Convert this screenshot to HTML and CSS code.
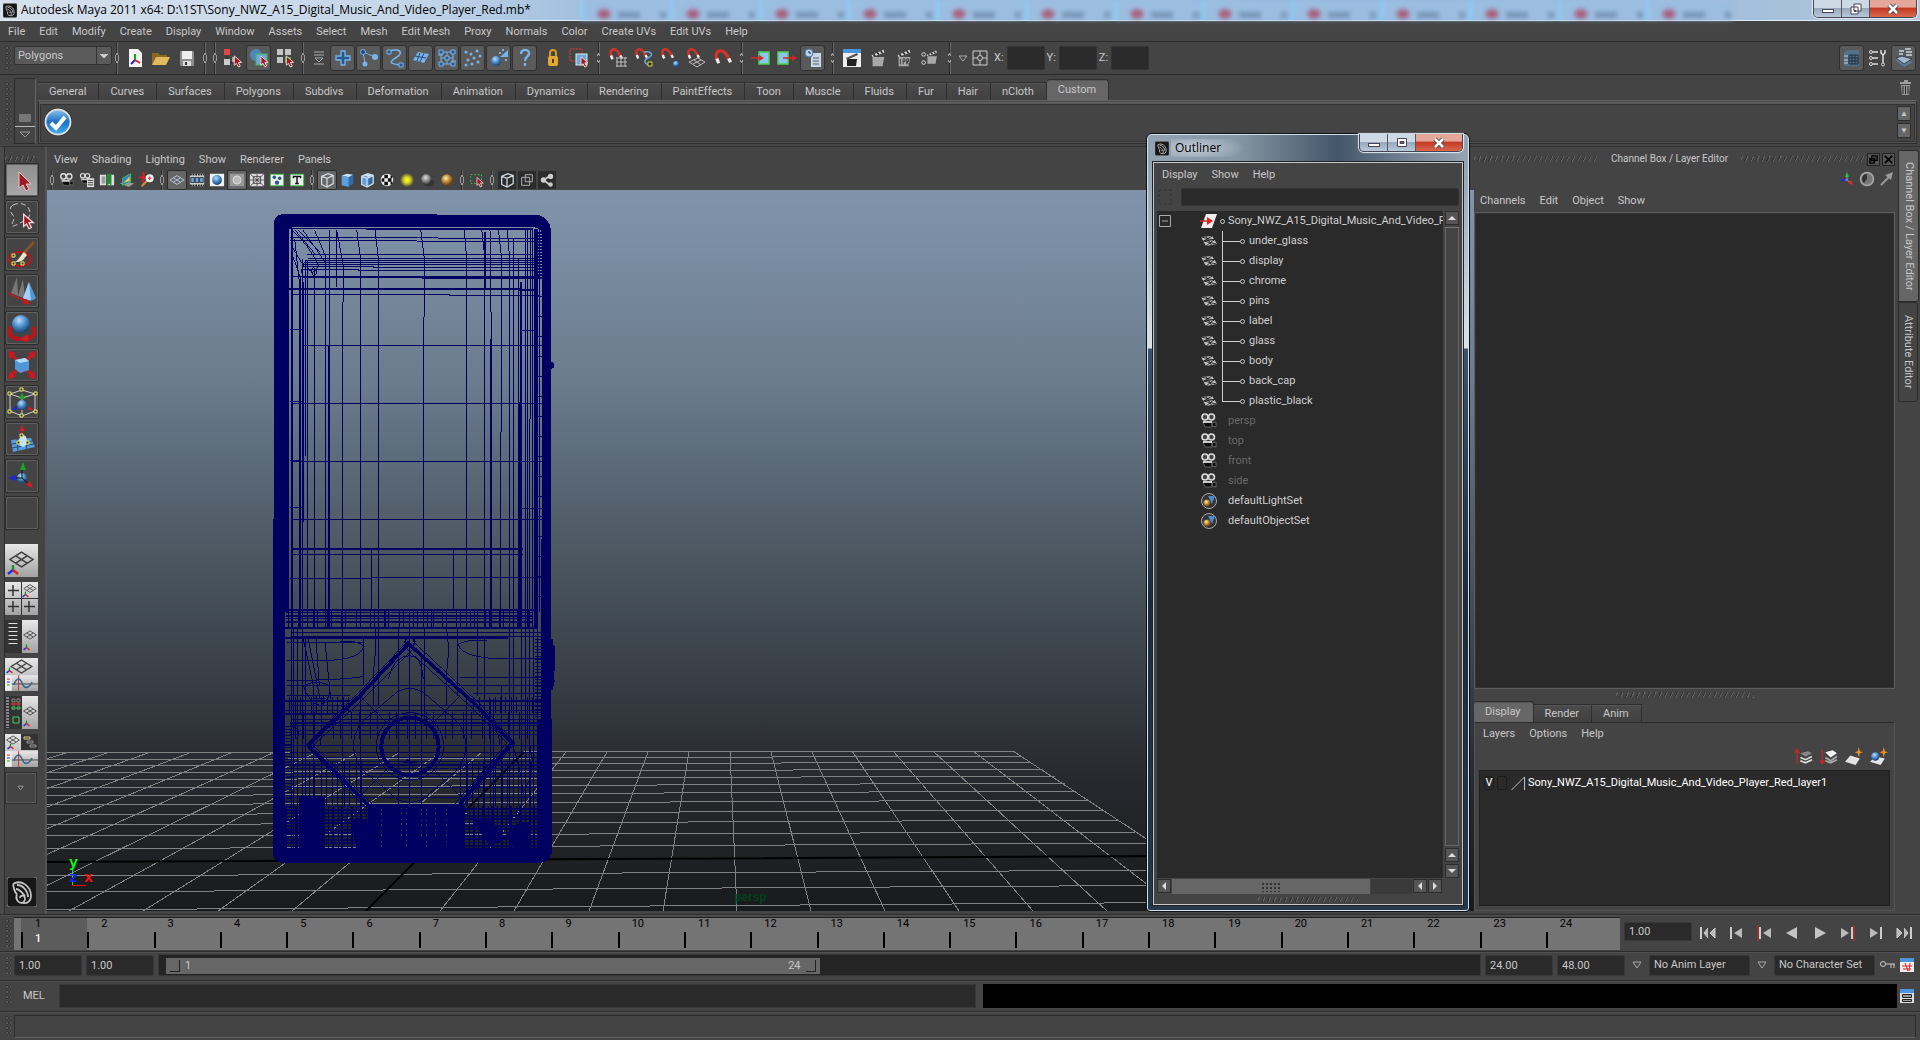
FILE: index.html
```html
<!DOCTYPE html>
<html lang="en">
<head>
<meta charset="utf-8">
<title>Autodesk Maya 2011 x64</title>
<link rel="stylesheet" href="styles.css">
</head>
<body>
<svg class="sprite" aria-hidden="true">
  <defs>
    <radialGradient id="gBall" cx=".4" cy=".3" r=".7"><stop offset="0" stop-color="#b9dcf8"/><stop offset=".5" stop-color="#4f90cf"/><stop offset="1" stop-color="#17406e"/></radialGradient>
    <radialGradient id="gGrey" cx=".45" cy=".35" r=".6"><stop offset="0" stop-color="#ddd"/><stop offset="1" stop-color="#555"/></radialGradient>
    <radialGradient id="gGold" cx=".4" cy=".35" r=".65"><stop offset="0" stop-color="#fff0b0"/><stop offset=".5" stop-color="#b98a3a"/><stop offset="1" stop-color="#5e3c0c"/></radialGradient>
    <radialGradient id="gSun"><stop offset="0" stop-color="#ffff40"/><stop offset=".4" stop-color="#dcdc20"/><stop offset="1" stop-color="#dcdc20" stop-opacity="0"/></radialGradient>
    <linearGradient id="gPlate" x2="0" y2="1"><stop offset="0" stop-color="#e8e8e8"/><stop offset="1" stop-color="#a2a2a2"/></linearGradient>
    <linearGradient id="gCheck" x2="0" y2="1"><stop offset="0" stop-color="#8cc4ee"/><stop offset=".5" stop-color="#1a6fc4"/><stop offset="1" stop-color="#45b4f4"/></linearGradient>
  </defs>
  <symbol id="cursor" viewBox="0 0 10 14"><path d="M1 1v10l2.400-2 2 4 2-1-2-4h3.600z" fill="#a3151f" stroke="#f3dede" stroke-width="1"/></symbol>
  <symbol id="logo" viewBox="0 0 30 30"><rect width="30" height="30" rx="3" fill="#161616" stroke="#777"/><path d="M6 7c8-5 18 2 18 12 0 5-4 8-8 7M6 7c1 4 1 8 4 10M10 8c6 0 11 6 11 12M9 12c4 0 7 5 9 7M10 17c-2 5 1 9 5 9 3-1 4-5 2-7-2-1-4 0-4 2" fill="none" stroke="#c4c4c4" stroke-width="1.800"/></symbol>
  <symbol id="axis" viewBox="0 0 12 12"><path d="M6 6V1" stroke="#08a020" stroke-width="2.400"/><path d="M6 6l-5 4" stroke="#1c2fe0" stroke-width="2.400"/><path d="M6 6l5 4" stroke="#e02020" stroke-width="2.400"/></symbol>
  <symbol id="plane" viewBox="0 0 24 16"><path d="M12 1l11 7-11 7L1 8zM6.500 4.500l11 7M17.500 4.500l-11 7" fill="none" stroke="#3c3c3c" stroke-width="1.400"/></symbol>
  <symbol id="cam" viewBox="0 0 18 18"><path d="M3 10h9v5H5zM12 11l4-1v5l-4-1z" fill="#0c0c0c" stroke="#777" stroke-width=".8"/><circle cx="5" cy="5" r="3" fill="#444" stroke="#ddd" stroke-width="1.600"/><circle cx="11.500" cy="5" r="3" fill="#444" stroke="#ddd" stroke-width="1.600"/><path d="M3 9h9v2H3z" fill="#ccc"/></symbol>
  <symbol id="mesh" viewBox="0 0 18 14"><path d="M1 3l11-1 5 8-11 2z" fill="#c4c4c4"/><path d="M6 2.500l5.500 8.500M3.500 7l11-1.500M1 3l13 3M3.500 7l13 3M12 2l-8 5M14.500 5.500L6 12" stroke="#1c1c1c" stroke-width=".9"/></symbol>
  <symbol id="set" viewBox="0 0 18 18"><circle cx="9" cy="9" r="7.500" fill="#333" stroke="#aaa"/><path d="M8 4h7l-3 8z" fill="#4a88d0"/><circle cx="7" cy="11" r="3.600" fill="url(#gGold)"/></symbol>
  <symbol id="magnet" viewBox="0 0 20 20"><path d="M5 12C1 5 5 1 9 2c4 0 6 6 9 11" fill="none" stroke="#d03428" stroke-width="3.600"/><path d="M4 10l2 5M16.500 10l2 4" stroke="#eee" stroke-width="3.400"/></symbol>
  <symbol id="clap" viewBox="0 0 20 22"><path d="M4 10h13l-2 10H4z" fill="#a8a8a8"/><path d="M3 8l13-6 1 3L4 10z" fill="#ddd"/><path d="M5 7l2 2M9 5l2 2M13 3.500l2 2" stroke="#222" stroke-width="1.800"/></symbol>
  <symbol id="cube" viewBox="0 0 18 18"><path d="M3 5l7-3 6 2v9l-7 4-6-3zM3 5l6 2 7-3M9 7v10" fill="none" stroke="currentColor" stroke-width="1.400"/></symbol>
  <symbol id="solid" viewBox="0 0 18 18"><path d="M3 4l6-2 7 1-5 3z" fill="#c4e4fc"/><path d="M3 4l8 2v11l-8-2z" fill="#5f9fdc"/><path d="M11 6l5-3v10l-5 4z" fill="#2f6cae"/></symbol>
  <symbol id="wave" viewBox="0 0 34 16"><rect width="34" height="16" fill="url(#gPlate)"/><rect width="7" height="16" fill="#eee"/><path d="M2 4h3" stroke="#d22"/><path d="M2 7h3" stroke="#22d"/><path d="M2 10h3" stroke="#2a2"/><path d="M7 9h27" stroke="#444"/><path d="M14 0v16" stroke="#d22"/><path d="M9 10c4-10 7-6 9-1s6 5 10-2" fill="none" stroke="#3b6590" stroke-width="1.600"/></symbol>
</svg>

<div class="app">
  <header class="titlebar">
    <svg class="i16"><use href="#logo"/></svg>
    <h1>Autodesk Maya 2011 x64: D:\1ST\Sony_NWZ_A15_Digital_Music_And_Video_Player_Red.mb*</h1>
    <div class="glass"><i></i><i></i><i></i><i></i><i></i><i></i><i></i><i></i><i></i><i></i><i></i><i></i><i></i></div>
    <div class="winbtns">
      <button aria-label="Minimize"><svg viewBox="0 0 20 16"><rect x="4.500" y="8.500" width="11" height="3" fill="#fff" stroke="#445"/></svg></button>
      <button aria-label="Restore"><svg viewBox="0 0 20 16"><path d="M8 3h7v7H8zM5 6h7v7H5z" fill="#fff" stroke="#445"/><path d="M8 9h2v2H8z" fill="#445"/></svg></button>
      <button class="close" aria-label="Close"><svg viewBox="0 0 20 16"><path d="M6 4l8 8M14 4l-8 8" stroke="#445" stroke-width="4.500"/><path d="M6 4l8 8M14 4l-8 8" stroke="#fff" stroke-width="2.500"/></svg></button>
    </div>
  </header>

  <nav class="menu mainmenu">
    <button>File</button><button>Edit</button><button>Modify</button><button>Create</button><button>Display</button><button>Window</button><button>Assets</button><button>Select</button><button>Mesh</button><button>Edit Mesh</button><button>Proxy</button><button>Normals</button><button>Color</button><button>Create UVs</button><button>Edit UVs</button><button>Help</button>
  </nav>

  <div class="status">
    <span class="vgrip"></span>
    <select class="mode" aria-label="Menu set"><option>Polygons</option></select>
    <span class="sep"></span>
    <button class="t" aria-label="New scene"><svg viewBox="0 0 20 20"><path d="M4 1h9l4 4v14H4z" fill="#f4f4f4"/><path d="M10 12V6" stroke="#1a1" stroke-width="2"/><path d="M10 12l-4 4" stroke="#22d" stroke-width="2"/><path d="M10 12l5 3" stroke="#d22" stroke-width="2"/></svg></button>
    <button class="t" aria-label="Open scene"><svg viewBox="0 0 20 20"><path d="M1 17V5h6l2 2h7v3" fill="#8c6a1c"/><path d="M1 17l4-8h14l-4 8z" fill="#e0b960"/></svg></button>
    <button class="t" aria-label="Save scene"><svg viewBox="0 0 20 20"><rect x="3" y="3" width="14" height="15" rx="1" fill="#8e8e8e"/><rect x="5" y="3" width="10" height="8" fill="#eee"/><rect x="6" y="13" width="8" height="5" fill="#ddd"/><path d="M8 14h2v3H8z" fill="#333"/></svg></button>
    <span class="sep"></span><span class="sep"></span>
    <button class="t" aria-label="Select by hierarchy"><svg viewBox="0 0 20 20"><rect x="1" y="1" width="6" height="6" fill="#e04848"/><path d="M4 8v7h5" stroke="#222" fill="none"/><rect x="1" y="11" width="6" height="6" fill="#ccc"/><rect x="9" y="9" width="5" height="5" fill="#aaa"/><use href="#cursor" x="10" y="7" width="10" height="13"/></svg></button>
    <button class="t on" aria-label="Select by object type"><svg viewBox="0 0 20 20"><circle cx="7" cy="7" r="6" fill="#4d86bd"/><rect x="7" y="6" width="11" height="11" fill="#6fa8dc" stroke="#3fb848"/><use href="#cursor" x="11" y="7" width="9" height="13"/></svg></button>
    <button class="t" aria-label="Select by component type"><svg viewBox="0 0 20 20"><path d="M2 1h6v6H2zM10 1h6v6h-6zM2 9h6v6H2z" fill="#c4c4c4"/><path d="M10 9h6v6h-6z" fill="#2db84a"/><use href="#cursor" x="10" y="7" width="10" height="13"/></svg></button>
    <span class="sep"></span>
    <button class="t slim" aria-label="Mask menu"><svg viewBox="0 0 20 20"><path d="M5 4h10M5 7h10M5 16h10M6 10h8l-4 4z" fill="none" stroke="#aaa"/></svg></button>
    <button class="t on" aria-label="Handles"><svg viewBox="0 0 20 20"><path d="M8 3h4v5h5v4h-5v5H8v-5H3V8h5z" fill="#28598c" stroke="#76b4ea" stroke-width="1.300"/></svg></button>
    <button class="t on" aria-label="Joints"><svg viewBox="0 0 20 20"><path d="M4 4l12 5M4 4l2 11" stroke="#76b4ea"/><circle cx="4" cy="4" r="2.500" fill="#1f4c7c" stroke="#76b4ea"/><circle cx="16" cy="9" r="3" fill="#76b4ea"/><circle cx="6" cy="16" r="2.500" fill="#76b4ea"/></svg></button>
    <button class="t on" aria-label="Curves"><svg viewBox="0 0 20 20"><path d="M4 4c8-5 16 0 8 5s-9 7 5 8" fill="none" stroke="#76b4ea" stroke-width="1.600"/><path d="M2 2h4v4H2zM14 15h4v4h-4z" fill="#28598c" stroke="#76b4ea"/></svg></button>
    <button class="t on" aria-label="Surfaces"><svg viewBox="0 0 20 20"><path d="M2 12l5-8 11 2-5 9z" fill="#76b4ea"/><path d="M4 8l11 2M9 5l-3 8M13 5l-4 9" stroke="#244a70"/></svg></button>
    <button class="t on" aria-label="Deformations"><svg viewBox="0 0 20 20"><path d="M4 4h12v12H4zM4 10h12M10 4v12M1 7h5M14 13h5" fill="none" stroke="#76b4ea"/><path d="M2 2h4v4H2zM14 2h4v4h-4zM2 14h4v4H2zM14 14h4v4h-4zM8 8h4v4H8z" fill="#28598c" stroke="#76b4ea"/></svg></button>
    <button class="t on" aria-label="Dynamics"><svg viewBox="0 0 20 20"><g fill="#76b4ea"><circle cx="3" cy="4" r="1.500"/><circle cx="8" cy="6" r="1.500"/><circle cx="14" cy="3" r="1.500"/><circle cx="17" cy="8" r="1.500"/><circle cx="11" cy="10" r="1.500"/><circle cx="5" cy="12" r="1.500"/><circle cx="15" cy="14" r="1.500"/><circle cx="9" cy="16" r="1.500"/><circle cx="3" cy="17" r="1.500"/></g></svg></button>
    <button class="t on" aria-label="Rendering"><svg viewBox="0 0 20 20"><circle cx="7" cy="13" r="5" fill="url(#gBall)"/><path d="M11 9l8-7v7zM10 4h2v2h-2zM13 1h2v2h-2zM16 11h2v2h-2z" fill="#76b4ea"/></svg></button>
    <button class="t on" aria-label="Miscellaneous"><svg viewBox="0 0 20 20"><path d="M6 6c0-6 9-5 8 0-1 3-4 3-4 7M10 15v3" fill="none" stroke="#76b4ea" stroke-width="2.400"/></svg></button>
    <button class="t lock" aria-label="Lock selection"><svg viewBox="0 0 20 20"><path d="M7 9V5c0-4 6-4 6 0v4" fill="none" stroke="#d09a28" stroke-width="2"/><rect x="5" y="8" width="10" height="10" rx="2" fill="#e2a92c"/><path d="M10 11v4" stroke="#523600" stroke-width="2"/></svg></button>
    <button class="t" aria-label="Highlight selection"><svg viewBox="0 0 20 20"><path d="M1 1h12v12H1z" fill="none" stroke="#e03838" stroke-dasharray="2 1"/><rect x="7" y="6" width="11" height="11" fill="#6fa8dc" stroke="#d8f0d8"/><use href="#cursor" x="11" y="8" width="9" height="12"/></svg></button>
    <span class="sep far"></span>
    <button class="t" aria-label="Snap to grids"><svg viewBox="0 0 20 20"><use href="#magnet" width="15" height="15"/><path d="M8 10h11M8 14h11M8 18h11M9 9v10M13 9v10M17 9v10" stroke="#bbb"/></svg></button>
    <button class="t" aria-label="Snap to curves"><svg viewBox="0 0 20 20"><use href="#magnet" width="14" height="14"/><path d="M10 4c8-1 10 3 4 6s-3 7 4 7" fill="none" stroke="#6fa8dc" stroke-width="1.500"/><path d="M14 14h4v4h-4z" fill="#222" stroke="#dede40"/></svg></button>
    <button class="t" aria-label="Snap to points"><svg viewBox="0 0 20 20"><use href="#magnet" width="14" height="14"/><circle cx="16" cy="16" r="3" fill="url(#gBall)"/></svg></button>
    <button class="t" aria-label="Snap to view planes"><svg viewBox="0 0 20 20"><use href="#magnet" width="14" height="14"/><path d="M3 14l9-4 7 4-8 5zM8 12l7 5M7 16l8-4" fill="none" stroke="#bbb"/></svg></button>
    <button class="t" aria-label="Make live"><svg viewBox="0 0 20 20"><use href="#magnet" x="1" y="1" width="19" height="19"/></svg></button>
    <span class="sep far"></span>
    <button class="t" aria-label="Inputs"><svg viewBox="0 0 20 20"><rect x="8" y="4" width="10" height="12" fill="#8cc6ee" stroke="#4fd04f" stroke-width="1.500"/><path d="M0 10h8" stroke="#d22" stroke-width="1.500"/><path d="M8 7l5 3-5 3z" fill="#d22"/></svg></button>
    <button class="t" aria-label="Outputs"><svg viewBox="0 0 20 20"><rect x="1" y="4" width="10" height="12" fill="#8cc6ee" stroke="#4fd04f" stroke-width="1.500"/><path d="M6 10h9" stroke="#d22" stroke-width="1.500"/><path d="M15 7l5 3-5 3z" fill="#d22"/></svg></button>
    <button class="t on" aria-label="Construction history"><svg viewBox="0 0 20 20"><path d="M8 5h10v14H8z" fill="#ccd6e2"/><path d="M10 10h6M10 13h6M10 16h6" stroke="#4a5a70"/><circle cx="6" cy="5" r="4" fill="#b9d2ec" stroke="#4b78a8"/><path d="M6 3v2h2" stroke="#223" fill="none"/></svg></button>
    <span class="sep far"></span>
    <button class="t" aria-label="Render view"><svg viewBox="0 0 20 20"><rect x="1" y="1" width="18" height="18" fill="#eee"/><rect x="1" y="1" width="18" height="4" fill="#4b94dc"/><path d="M5 11h10l-1 7H5z" fill="#222"/><path d="M4 10l11-5 1 2-11 5" fill="#555"/></svg></button>
    <button class="t" aria-label="Render frame"><svg viewBox="0 0 20 22"><use href="#clap" width="20" height="22"/></svg></button>
    <button class="t" aria-label="IPR render"><svg viewBox="0 0 20 22"><use href="#clap" width="20" height="22"/><path d="M6 12v6M9 18v-6h2v3H9M13 18v-6h2v3h-2l2 3" stroke="#333" fill="none"/></svg></button>
    <button class="t" aria-label="Render settings"><svg viewBox="0 0 20 22"><use href="#clap" x="4" width="16" height="20"/><circle cx="3" cy="7" r="2" fill="none" stroke="#ddd"/><circle cx="3" cy="16" r="2" fill="none" stroke="#ddd"/></svg></button>
    <span class="sep far"></span>
    <button class="t tiny" aria-label="Input mode"><svg viewBox="0 0 12 20"><path d="M2 8h8l-4 5z" fill="none" stroke="#aaa"/></svg></button>
    <button class="t tiny wide" aria-label="Absolute transform"><svg viewBox="0 0 18 20"><path d="M2 3h14v14H2zM9 3v14M2 10h14" fill="none" stroke="#ccc"/><circle cx="9" cy="10" r="2.500" fill="#444" stroke="#ccc"/></svg></button>
    <label>X:<input type="text" aria-label="X"></label>
    <label>Y:<input type="text" aria-label="Y"></label>
    <label>Z:<input type="text" aria-label="Z"></label>
    <span class="grow"></span>
    <button class="t on" aria-label="Attribute editor"><svg viewBox="0 0 20 20"><path d="M2 4l4-2h11v16H2z" fill="#557089"/><path d="M7 7h9v9H7zM7 10h9M7 13h9M10 7v9M13 7v9" fill="none" stroke="#1f2e3c"/><path d="M2 8h4M2 12h4M2 15h4" stroke="#c8d4e0"/></svg></button>
    <button class="t" aria-label="Tool settings"><svg viewBox="0 0 20 20"><path d="M5 4h5M5 10h5M5 16h5M15 7v8" stroke="#ddd" stroke-width="1.500"/><path d="M13 2v3l2 2 2-2V2" fill="none" stroke="#ddd" stroke-width="1.500"/><g fill="none" stroke="#ddd"><circle cx="3" cy="4" r="1.500"/><circle cx="3" cy="10" r="1.500"/><circle cx="3" cy="16" r="1.500"/><circle cx="15" cy="16.500" r="1.500"/></g></svg></button>
    <button class="t on" aria-label="Channel box"><svg viewBox="0 0 20 20"><path d="M1 12l8-2 10 4-9 5z" fill="#5f7c98"/><path d="M2 10l6-2 10 3-8 5z" fill="#a4b8ca" stroke="#345"/><path d="M5 3h5M5 6h4M11 1h6M12 4h6M12 7h6" stroke="#ccd8e4" stroke-width="1.500"/></svg></button>
  </div>

  <section class="shelf">
    <span class="vgrip"></span>
    <div class="shelfside"><svg viewBox="0 0 20 30"><rect x="4" y="1" width="12" height="8" rx="1" fill="#777"/><path d="M0 13.500h20" stroke="#bbb"/><path d="M5 19h10l-5 5z" fill="none" stroke="#999"/></svg></div>
    <div class="shelfmain">
      <div class="tabs" role="tablist">
        <button role="tab">General</button><button role="tab">Curves</button><button role="tab">Surfaces</button><button role="tab">Polygons</button><button role="tab">Subdivs</button><button role="tab">Deformation</button><button role="tab">Animation</button><button role="tab">Dynamics</button><button role="tab">Rendering</button><button role="tab">PaintEffects</button><button role="tab">Toon</button><button role="tab">Muscle</button><button role="tab">Fluids</button><button role="tab">Fur</button><button role="tab">Hair</button><button role="tab">nCloth</button><button role="tab" class="sel" aria-selected="true">Custom</button>
        <svg class="trash" viewBox="0 0 14 16"><path d="M3 5h9l-1 10H4z" fill="#999"/><path d="M5 6v8M7.500 6v8M10 6v8" stroke="#222"/><path d="M2 3h11M6 1h4" stroke="#bbb" stroke-width="1.600"/></svg>
      </div>
      <div class="shelfbody">
        <button class="shelfitem" aria-label="Custom tool"><svg viewBox="0 0 30 30"><circle cx="15" cy="15" r="14" fill="#222"/><circle cx="15" cy="15" r="12.500" fill="url(#gCheck)" stroke="#dcdcdc" stroke-width="2"/><path d="M8 16l5 5 9-11" fill="none" stroke="#fff" stroke-width="4"/></svg></button>
        <div class="spin"><button aria-label="Up">▲</button><button aria-label="Down">▼</button></div>
      </div>
    </div>
  </section>

  <main class="work">
    <aside class="toolbox">
      <span class="hgrip"></span>
      <div class="tools">
        <button class="sel" aria-label="Select"><svg viewBox="0 0 34 34"><path d="M14 9v16l4-3 3 6 3-2-3-5h5z" fill="#9c1c24" stroke="#e8c8c8"/></svg></button>
        <button aria-label="Lasso"><svg viewBox="0 0 34 34"><path d="M8 5c6-3 14-1 16 4s1 9-5 12-14 8-12 3 3-6 0-10-2-7 1-9z" fill="none" stroke="#ccc" stroke-dasharray="5 3"/><use href="#cursor" x="17" y="13" width="13" height="17"/></svg></button>
        <button aria-label="Paint selection"><svg viewBox="0 0 34 34"><ellipse cx="15" cy="22" rx="11" ry="7" fill="none" stroke="#b8141c" stroke-width="2"/><path d="M29 5L18 17" stroke="#80532c" stroke-width="3"/><path d="M19 15l3 3-4 5c-3 2-5 2-8 2 4-2 5-6 9-10z" fill="#ece4c4"/><path d="M7 17h3v3H7zM7 25h3v3H7zM16 25h3v3h-3z" fill="#333" stroke="#f0f060"/></svg></button>
        <button aria-label="Move"><svg viewBox="0 0 34 34"><path d="M12 3L6 19l7 3zM18 5l-5 17 7 2z" fill="#777"/><path d="M24 8l7 16c-4 4-9 3-13 0z" fill="#4f97d8"/><path d="M24 8l2 18c-3 0-6-1-8-2z" fill="#a4d0f4"/><path d="M3 19l16 8-1 2 7 1-4-5-1 1z" fill="#c41820" stroke="#c41820"/></svg></button>
        <button aria-label="Rotate"><svg viewBox="0 0 34 34"><path d="M6 16c-5 9 3 12 10 12M28 16c4 7 0 10-6 12" fill="none" stroke="#b8141c" stroke-width="4"/><path d="M23 23v8l-9-2z" fill="#d01c24"/><circle cx="16" cy="13" r="9" fill="url(#gBall)"/></svg></button>
        <button aria-label="Scale"><svg viewBox="0 0 34 34"><path d="M3 3l8 2-2 2 6 6-2 2-6-6-2 2zM31 3l-8 2 2 2-6 6 2 2 6-6 2 2zM3 31l8-2-2-2 6-6-2-2-6 6-2-2zM31 31l-8-2 2-2-6-6 2-2 6 6 2-2z" fill="#cc1820"/><path d="M10 12l10-2 4 3v9l-9 3-5-4z" fill="#4f97d8"/><path d="M10 12l10-2 4 3-9 2z" fill="#b4dcf8"/></svg></button>
        <button aria-label="Universal manipulator"><svg viewBox="0 0 34 34"><path d="M5 9l12-4 13 4v17l-13 5-12-5zM5 9l12 4 13-4M17 13v18" fill="none" stroke="#ccc"/><circle cx="17" cy="20" r="5" fill="url(#gBall)"/><path d="M17 8l3 6h-6z" fill="#18a828"/><path d="M6 25l6-4v4z" fill="#2028d0"/><path d="M29 25l-6-4v4z" fill="#d01c24"/><path d="M15 3h3v3h-3zM3 7h3v3H3zM29 7h3v3h-3zM3 25h3v3H3zM29 25h3v3h-3zM15 29h3v3h-3z" fill="#333" stroke="#f0f060"/></svg></button>
        <button aria-label="Soft modification"><svg viewBox="0 0 34 34"><path d="M6 18l20-2 4 9-22 5z" fill="#5b9cdc"/><path d="M7 22l21-3M7 26l22-4M12 17l1 12M19 16l3 11" stroke="#224a70"/><ellipse cx="18" cy="19" rx="4" ry="6" fill="#c4e2fa"/><path d="M17 3l3 6h-6z" fill="#d01c24"/><path d="M17 8v5" stroke="#d01c24"/><path d="M15 12h3v3h-3zM12 19h3v3h-3zM21 19h3v3h-3z" fill="#333" stroke="#f0f060"/></svg></button>
        <button aria-label="Show manipulator"><svg viewBox="0 0 34 34"><circle cx="17" cy="19" r="5" fill="url(#gBall)"/><path d="M17 19V9M17 19H9M17 19l7 6" stroke="#111"/><path d="M18 3l3 8h-6z" fill="#18a828"/><path d="M3 19l8-3v6z" fill="#2028d0"/><path d="M28 29l-7-3 4-4z" fill="#d01c24"/></svg></button>
        <button aria-label="Last tool"></button>
      </div>
      <div class="layouts">
        <button aria-label="Single perspective"><svg viewBox="0 0 33 33"><rect width="33" height="33" fill="url(#gPlate)"/><use href="#plane" x="4" y="7" width="25" height="17"/><use href="#axis" x="2" y="20" width="12" height="12"/></svg></button>
        <button aria-label="Four view"><svg viewBox="0 0 33 33"><rect width="33" height="33" fill="url(#gPlate)"/><path d="M8 3v11M3 8.500h11M8 19v11M3 24.500h11M24 19v11M19 24.500h11" stroke="#333" stroke-width="1.500"/><path d="M16.500 0v33M0 16.500h33" stroke="#333"/><use href="#plane" x="18" y="2" width="14" height="9"/><use href="#axis" x="17" y="9" width="7" height="7"/></svg></button>
        <button aria-label="Outliner and perspective"><svg viewBox="0 0 33 33"><rect width="33" height="33" fill="#333"/><rect x="17" width="16" height="33" fill="url(#gPlate)"/><path d="M8 3v22" stroke="#ddd" stroke-width="9" stroke-dasharray="1 3"/><use href="#plane" x="18" y="10" width="14" height="10"/><use href="#axis" x="18" y="24" width="7" height="7"/></svg></button>
        <button aria-label="Perspective and graph"><svg viewBox="0 0 33 33"><rect width="33" height="33" fill="url(#gPlate)"/><use href="#plane" x="5" y="1" width="23" height="15"/><use href="#axis" x="1" y="9" width="7" height="7"/><use href="#wave" y="17" width="33" height="16"/></svg></button>
        <button aria-label="Hypershade and perspective"><svg viewBox="0 0 33 33"><rect width="33" height="33" fill="#333"/><rect x="17" width="16" height="33" fill="url(#gPlate)"/><path d="M2.500 1v31" stroke="#888" stroke-width="3" stroke-dasharray="2 1"/><path d="M7 3h3v3H7zM12 3h3v3h-3z" fill="none" stroke="#888"/><path d="M7 7h3v2H7zM12 7h3v2h-3z" fill="none" stroke="#c44"/><path d="M7 11h3v2H7zM12 11h3v2h-3zM8 21h6v6H8z" fill="none" stroke="#4c6"/><use href="#plane" x="18" y="10" width="14" height="10"/><use href="#axis" x="18" y="24" width="7" height="7"/></svg></button>
        <button aria-label="Perspective, hypergraph and graph"><svg viewBox="0 0 33 33"><rect width="33" height="33" fill="url(#gPlate)"/><rect x="16" width="17" height="16" fill="#333"/><use href="#plane" x="1" y="1" width="14" height="10"/><use href="#axis" x="2" y="9" width="7" height="7"/><path d="M19 3h6v2h-6z" stroke="#dc8" fill="none"/><path d="M22 7h6v2h-6zM25 11h6v2h-6z" stroke="#999" fill="none"/><use href="#wave" y="17" width="33" height="16"/></svg></button>
        <button class="more" aria-label="More layouts"><svg viewBox="0 0 33 33"><path d="M13 14h6l-3 4z" fill="none" stroke="#999"/></svg></button>
      </div>
      <svg class="mayalogo"><use href="#logo"/></svg>
    </aside>

    <section class="panel">
      <nav class="menu panelmenu"><button>View</button><button>Shading</button><button>Lighting</button><button>Show</button><button>Renderer</button><button>Panels</button></nav>
      <div class="paneltools">
        <span class="sep"></span>
        <button aria-label="Select camera"><svg viewBox="0 0 18 18"><use href="#cam" width="18" height="18"/></svg></button>
        <button aria-label="Camera attributes"><svg viewBox="0 0 18 18"><use href="#cam" width="15" height="15"/><path d="M9 7h8v10H9z" fill="#ddd"/><path d="M10 9.500h6M10 12h6M10 14.500h6" stroke="#333"/></svg></button>
        <button aria-label="Bookmarks"><svg viewBox="0 0 18 18"><path d="M1 3h7v12H1zM10 3h7v12h-7z" fill="#ddd"/><path d="M3 5h4v8H3z" fill="#999"/><path d="M9 2h5v14l-2.500-3L9 16z" fill="#1f8c34"/></svg></button>
        <button aria-label="Image plane"><svg viewBox="0 0 18 18"><path d="M1 13l6-3 10 3-6 4z" fill="#999"/><path d="M4 7l9-5v9l-9 4z" fill="#3a7cd0" stroke="#3ccc48"/><path d="M5 12l7-7v5z" fill="#e4d040"/></svg></button>
        <button aria-label="Pan and zoom"><svg viewBox="0 0 18 18"><path d="M5 0v12M0 6h11" stroke="#e02020" stroke-width="2"/><path d="M3 16l7-7" stroke="#c88a48" stroke-width="2.400"/><circle cx="12" cy="7" r="4.500" fill="#eee"/><path d="M12 5v4M10 7h4" stroke="#d22"/></svg></button>
        <span class="sep"></span>
        <button class="on" aria-label="Grid"><svg viewBox="0 0 18 18"><path d="M1 9l8-5 8 5-8 5zM5 6.500l8 5M13 6.500l-8 5" fill="none" stroke="#b8cce0"/></svg></button>
        <button aria-label="Film gate"><svg viewBox="0 0 18 18"><path d="M1 2h16v14H1z" fill="#e4e4e4"/><path d="M1 3h16M1 15h16" stroke="#111" stroke-width="2" stroke-dasharray="2 1"/><path d="M2 6h4v6H2zM7 6h4v6H7zM12 6h4v6h-4z" fill="#6aa8e4" stroke="#222"/></svg></button>
        <button aria-label="Resolution gate"><svg viewBox="0 0 18 18"><path d="M1 2h16v14H1z" fill="#f0f0f0"/><circle cx="9" cy="9" r="5.500" fill="url(#gBall)"/></svg></button>
        <button class="on" aria-label="Gate mask"><svg viewBox="0 0 18 18"><path d="M1 2h16v14H1z" fill="#999"/><circle cx="9" cy="9" r="4.500" fill="#bbb" stroke="#ddd"/></svg></button>
        <button aria-label="Field chart"><svg viewBox="0 0 18 18"><path d="M1 2h16v14H1z" fill="#ddd"/><path d="M1 2l16 14M17 2L1 16M9 2v14M1 9h16M5 5h8v8H5z" fill="none" stroke="#333" stroke-width=".8"/></svg></button>
        <button aria-label="Safe action"><svg viewBox="0 0 18 18"><path d="M1.500 2.500h15v13h-15z" fill="#eee" stroke="#3cbc48"/><circle cx="6" cy="6" r="2" fill="#28598c"/><circle cx="12" cy="7" r="2" fill="#28598c"/><circle cx="9" cy="12" r="2.400" fill="#28598c"/></svg></button>
        <button aria-label="Safe title"><svg viewBox="0 0 18 18"><path d="M1.500 2.500h15v13h-15z" fill="#eee" stroke="#3cbc48"/><path d="M5 7V5h8v2M9 5v8M7 13h4" fill="none" stroke="#111" stroke-width="1.600"/></svg></button>
        <span class="sep"></span>
        <button class="on wf" aria-label="Wireframe"><svg><use href="#cube"/></svg></button>
        <button aria-label="Smooth shade"><svg><use href="#solid"/></svg></button>
        <button class="wf" aria-label="Wireframe on shaded"><svg viewBox="0 0 18 18"><use href="#solid" width="18" height="18"/><use href="#cube" width="18" height="18"/></svg></button>
        <button aria-label="Textured"><svg viewBox="0 0 18 18"><circle cx="9" cy="9" r="7" fill="#eee"/><path d="M6 3h4v4H6zM3 7h3v4H3zM10 7h4v4h-4zM6 11h4v4H6zM13 4h2v3h-2zM13 11h2v3h-2z" fill="#111"/></svg></button>
        <button aria-label="Use all lights"><svg viewBox="0 0 18 18"><circle cx="9" cy="9" r="8" fill="url(#gSun)"/></svg></button>
        <button aria-label="Shadows"><svg viewBox="0 0 18 18"><ellipse cx="11" cy="12" rx="6" ry="4" fill="#222" opacity=".5"/><circle cx="8" cy="8" r="5.500" fill="url(#gGrey)"/></svg></button>
        <button aria-label="High quality"><svg viewBox="0 0 18 18"><circle cx="9" cy="9" r="6.500" fill="url(#gGold)"/></svg></button>
        <span class="sep"></span>
        <button aria-label="Isolate select"><svg viewBox="0 0 18 18"><path d="M2 3h12v10H2z" fill="none" stroke="#3ccc48" stroke-dasharray="2 2"/><use href="#cursor" x="8" y="5" width="9" height="13"/></svg></button>
        <span class="sep"></span>
        <button class="dk wf" aria-label="X-ray"><svg><use href="#cube"/></svg></button>
        <button class="dk" aria-label="X-ray components"><svg viewBox="0 0 18 18"><path d="M3 6h9v9H3zM7 3h8v8H7z" fill="none" stroke="#bbb"/></svg></button>
        <button class="dk" aria-label="X-ray joints"><svg viewBox="0 0 18 18"><path d="M13 4L5 9l8 6" stroke="#ccc" fill="none" stroke-width="2"/><circle cx="13" cy="5" r="3" fill="#ccc"/><circle cx="5" cy="9" r="3" fill="#ccc"/><circle cx="13" cy="14" r="2.500" fill="#ccc"/></svg></button>
      </div>
      <div class="viewport">
        <svg viewBox="47 191 1427 721" preserveAspectRatio="xMinYMin slice" role="img" aria-label="Perspective view of the wireframe model">
          <!-- ground grid -->
          <g class="grid">
            <path d="M47 754L1013 752M47 761L1020 757M47 767L1031 763M47 774L1043 770M47 781L1055 777M47 789L1065 784M47 797L1076 792M47 806L1088 801M47 816L1102 811M47 826L1118 821M47 837L1135 833M47 850L1157 844M47 877L1203 871M47 893L1229 886M47 911L1255 903"/>
            <path d="M69 753L-450 912M110 753L-376 912M151 753L-302 912M192 753L-227 912M233 753L-153 912M275 753L-79 912M317 753L-5 912M358 753L69 912M400 753L143 912M441 753L218 912M482 753L292 912M566 753L440 912M607 753L514 912M648 753L589 912M689 753L663 912M730 753L737 912M771 753L811 912M812 753L885 912M852 752L959 912M893 752L1033 912M933 752L1107 912M973 752L1182 912M1013 752L1256 912"/>
          </g>
          <path class="axes" d="M47 863L1180 857M524 753L366 912"/>
          <!-- upper half of the model, three units to the pixel -->
          <g class="wire" transform="translate(260 200) scale(.333333)">
            <path class="fill cut" d="M42 70Q44 50 66 45H530V48H835Q868 55 874 95V796H872V1950H39V960H42zM88 90V1240H76V1950H846V100Q840 88 820 84H100z"/>
            <path d="M90 82H600M84 88H820M318 93H820M90 116H530L540 120H835M90 124H470V127H835M140 167H820M145 178H835M140 184H835M135 190H835M130 196H835M128 202H340V206H835M128 211H295V214H835M94 234H840M94 287H570V290H840M128 439H850M90 391H130M785 394H828M90 608H125M94 613H850M90 784H120M94 787H850M94 961H850M90 925H130M785 928H850"/>
            <path class="w7" d="M128 234H490V237H830M84 270H780V274H830"/>
            <path d="M94 90V1290M98 90V1290M104 120L118 250V1290M128 180V1290M136 184V770M142 184V1290M163 92L196 170V1290M163 210V1290M208 92V1290M230 92V265M230 92L250 200V310M248 310V1290M290 92L302 180V1290M345 92L355 180V1290M482 92L493 180V354M490 354V1290M613 92L620 180V1290M665 90L674 170V1290M690 92L694 420V1290M715 92L724 170V700M721 700V1290M742 92L748 170V1290M760 120V1290M775 180V1290M796 90V1290M804 90V1290M812 92V660M808 660V1290M818 92V1290"/>
            <path class="w7" d="M120 240V1290M128 250V970M207 440V1290M693 420V1290M674 100V270M784 250V1290M780 610V1290"/>
            <path class="w9" d="M828 90V1290"/>
            <path d="M94 92Q150 140 175 200Q160 240 140 200M104 92L165 165M114 92L180 160M128 92L196 190M94 140L130 200M98 170L122 240M145 182Q118 190 128 240M160 205Q178 215 163 232Q148 220 160 205"/>
            <path d="M840 90V1240"/>
            <path d="M838 100V240" stroke-dasharray="5 4" stroke-width="30"/>
            <path d="M838 290V1250" stroke-dasharray="3 57" stroke-width="26"/>
            <path class="fill" d="M874 488l8 4v14l-8 4z"/>
          </g>
          <!-- lower half of the model -->
          <g class="wire" transform="translate(260 540) scale(.333333)">
            <path d="M94 46H790M90 118H335M335 116H850M334 34V212M580 34V212M78 222H820M78 240H820M94 282H845M94 292H845M80 310H310M80 364H210Q300 360 312 322Q290 300 230 310M848 358H690Q605 350 594 318Q610 300 680 306M80 424Q250 424 312 412M600 416H848M80 440H848M80 470H270M640 465H848M94 500H848M70 514H848M70 528H848M94 542H840M90 560H840M90 574H830M90 586H850M70 619H850M90 640H830M90 655H830M80 668H850M80 690H830M94 703H850M80 712H850M80 745H830M80 775H850"/>
            <path class="w7" d="M94 30H790M84 212H830M78 232H820M78 250H820M76 266H830M60 298H745M60 486H270M640 486H845M60 524H230M90 551H835M75 678H835"/>
            <path d="M94 270V960M101 270V960M113 270V960M128 270V960M136 300V960M161 440V960M248 210V960M302 470V800M310 300V440M345 270Q350 330 340 400V500M355 270V500M378 210V265M415 270V800M448 210V800M486 350V800M494 270V560M520 210V265M560 270Q570 330 560 400V500M594 270V470M620 470V800M652 210V470M674 300V960M692 480V800M700 480V960M724 440V960M748 210V960M760 270V800M784 270V960M796 270V960M808 270V960M820 270V960M834 100V560M846 0V960M145 300L180 480M130 300L160 440M168 300L178 440M195 310L212 480"/>
            <path d="M84 239H822" stroke-width="50" stroke-dasharray="3 28 3 9"/>
            <path class="w9" d="M450 310L300 470 145 619 325 800M450 318L650 500 755 612 600 795"/>
            <path d="M444 306L290 466 138 619 310 800M458 330L300 490 160 619 340 800M458 306L660 495 765 612 610 800M440 330L640 510 740 612 580 800M450 350Q400 350 385 420M450 350Q485 350 490 420M280 619Q280 560 340 520L410 460Q450 435 490 460L560 520Q618 560 618 619Q618 680 560 720L490 780Q450 800 410 780L340 720Q280 680 280 619M180 619Q180 560 240 540M720 619Q720 560 660 540M180 640L300 760M718 640L620 760M300 470L380 550M600 470L520 550M380 690L300 770M520 690L600 770"/>
            <path d="M130 440Q170 420 210 440Q215 480 180 500Q145 490 130 440M170 470h20v30h-20zM163 480h34M748 600Q780 660 790 770M94 560Q130 570 110 600M810 620Q830 700 790 760"/>
            <circle cx="450" cy="622" r="86" class="w12"/>
            <circle cx="450" cy="622" r="101"/>
            <circle cx="450" cy="308" r="14" class="w7"/>
            <path class="w7" d="M430 670h42M440 662l20 20M375 551h150"/>
            <!-- tightly packed geometry along the lower edge -->
            <path d="M76 560V960" stroke-width="38" stroke-dasharray="3 6"/>
            <path d="M838 280V540" stroke-width="24" stroke-dasharray="3 7"/>
            <path d="M72 498H270M640 498H848" stroke-width="50" stroke-dasharray="3 13"/>
            <path d="M72 560H830" stroke-width="80" stroke-dasharray="3 31 3 19"/>
            <path d="M92 735H310M600 735H830" stroke-width="130" stroke-dasharray="3 17 3 12"/>
            <path d="M202 800V950" stroke-width="250" stroke-dasharray="5 5"/>
            <path d="M76 875H330M610 875H848" stroke-width="150" stroke-dasharray="6 11 3 8"/>
            <path d="M722 808V950" stroke-width="236" stroke-dasharray="5 5"/>
            <path class="fill" d="M118 770H194V935H118zM272 850Q300 820 330 860V930H290zM325 795H610V960H325zM640 850Q670 820 710 860L740 900 690 920zM740 890Q770 840 810 850V930H760zM39 928H872V945Q868 968 845 971H66Q42 968 39 945zM830 540H875V945H830z"/>
            <path class="gaps" d="M366 810V930M426 808V900M440 808V930M485 810V900M500 810V930M528 808V900M560 810V920"/>
            <path class="fill" d="M868 304l10-4 2 18 6 4v28l-2 8 2 30-4 12 2 28-6 24-10 6z"/>
          </g>
          <g class="gizmo"><path d="M72.500 870v17" stroke="#0f0"/><path d="M72 886.500h14" stroke="#f00"/>
            <text x="69" y="868" fill="#00ff1c">y</text><text x="69" y="883" fill="#1020ff">z</text><text x="84" y="883" fill="#ff1010">x</text>
            <text x="734" y="902" class="persp">persp</text></g>
        </svg>
      </div>
    </section>

    <aside class="channel">
      <div class="docktitle"><span class="hgrip"></span><h2>Channel Box / Layer Editor</h2><span class="hgrip"></span>
        <button aria-label="Float"><svg viewBox="0 0 12 12"><path d="M4 2h6v5H4zM2 5h5v5H2z" fill="#444" stroke="#000" stroke-width="1.500"/></svg></button><button aria-label="Close"><svg viewBox="0 0 12 12"><path d="M2 2l8 8M10 2l-8 8" stroke="#000" stroke-width="2"/></svg></button></div>
      <div class="chicons">
        <svg viewBox="0 0 16 16"><path d="M8 9V4M8 9H3M8 9l4 3" stroke="#999"/><path d="M8 1l2 5H6z" fill="#1fc838"/><path d="M1 9l5-2v4z" fill="#2030e0"/><path d="M14 14l-5-2 3-3z" fill="#e02828"/></svg>
        <svg viewBox="0 0 16 16"><circle cx="8" cy="8" r="6.500" fill="#777" stroke="#aaa" stroke-width="1.500"/><path d="M8 3v5l-3 4a5 5 0 0 1 3-9" fill="#333"/></svg>
        <svg viewBox="0 0 16 16"><path d="M2 14l9-9" stroke="#999" stroke-width="2"/><path d="M14 1l-2 8-6-5z" fill="#999"/></svg>
      </div>
      <nav class="menu chmenu"><button>Channels</button><button>Edit</button><button>Object</button><button>Show</button></nav>
      <div class="chbox"></div>
      <span class="hgrip mid"></span>
      <div class="tabs layertabs" role="tablist"><button role="tab" class="sel" aria-selected="true">Display</button><button role="tab">Render</button><button role="tab">Anim</button></div>
      <div class="layers">
        <nav class="menu"><button>Layers</button><button>Options</button><button>Help</button></nav>
        <div class="layericons">
          <svg viewBox="0 0 18 18"><path d="M3 16V3M1 6l2-4 2 4" stroke="#d22" fill="none"/><path d="M6 6l7-2 4 2-6 3z" fill="#888"/><path d="M6 10l5 2 6-3M6 13l5 2 6-3" stroke="#ddd" stroke-width="1.600" fill="none"/></svg>
          <svg viewBox="0 0 18 18"><path d="M3 2v13M1 12l2 4 2-4" stroke="#d22" fill="none"/><path d="M6 5l7-2 4 3-6 4z" fill="#f4f4f4"/><path d="M6 10l5 3 6-4M6 13l5 2 6-3" stroke="#aaa" stroke-width="1.600" fill="none"/></svg>
          <svg viewBox="0 0 18 18"><path d="M1 14l5-6 9 3-4 6z" fill="#e4e4e4"/><path d="M14 0l1 4 3 1-3 1-1 4-1-4-3-1 3-1z" fill="#f09028"/></svg>
          <svg viewBox="0 0 18 18"><path d="M1 14l5-5 9 2-4 6z" fill="#e4e4e4"/><circle cx="6" cy="9" r="4" fill="url(#gBall)"/><path d="M14 0l1 4 3 1-3 1-1 4-1-4-3-1 3-1z" fill="#f09028"/></svg>
        </div>
        <div class="layerlist"><div class="layer"><button class="vis">V</button><button class="vis" aria-label="Display type"></button><svg viewBox="0 0 16 16"><path d="M1 15L15 1v14" fill="none" stroke="#ccc"/></svg><span>Sony_NWZ_A15_Digital_Music_And_Video_Player_Red_layer1</span></div></div>
      </div>
    </aside>
    <div class="sidetabs"><button class="sel">Channel Box / Layer Editor</button><button>Attribute Editor</button></div>
  </main>

  <div class="timerow">
    <span class="vgrip"></span>
    <ol class="timeline"><li class="cur">1<b>1</b></li><li>2</li><li>3</li><li>4</li><li>5</li><li>6</li><li>7</li><li>8</li><li>9</li><li>10</li><li>11</li><li>12</li><li>13</li><li>14</li><li>15</li><li>16</li><li>17</li><li>18</li><li>19</li><li>20</li><li>21</li><li>22</li><li>23</li><li>24</li></ol>
    <input class="num" type="text" value="1.00" aria-label="Current time">
    <div class="play">
      <button aria-label="Go to start"><svg viewBox="0 0 20 16"><path d="M3 2v12" stroke="#ccc" stroke-width="2"/><path d="M10 3L6 8l4 5M17 3v10l-5-5z" fill="#bbb" stroke="#ccc"/></svg></button>
      <button aria-label="Step back frame"><svg viewBox="0 0 20 16"><path d="M5 2v12" stroke="#ccc" stroke-width="2"/><path d="M16 3v10L8 8z" fill="#bbb"/></svg></button>
      <button aria-label="Step back key"><svg viewBox="0 0 20 16"><path d="M6 2v12" stroke="#ccc" stroke-width="2"/><path d="M4 0v16" stroke="#e02020"/><path d="M17 3v10L9 8z" fill="#bbb"/></svg></button>
      <button aria-label="Play backwards"><svg viewBox="0 0 20 16"><path d="M15 2v12L4 8z" fill="#c4c4c4"/></svg></button>
      <button aria-label="Play forwards"><svg viewBox="0 0 20 16"><path d="M5 2v12l11-6z" fill="#c4c4c4"/></svg></button>
      <button aria-label="Step forward key"><svg viewBox="0 0 20 16"><path d="M14 2v12" stroke="#ccc" stroke-width="2"/><path d="M16 0v16" stroke="#e02020"/><path d="M3 3v10l8-5z" fill="#bbb"/></svg></button>
      <button aria-label="Step forward frame"><svg viewBox="0 0 20 16"><path d="M15 2v12" stroke="#ccc" stroke-width="2"/><path d="M4 3v10l8-5z" fill="#bbb"/></svg></button>
      <button aria-label="Go to end"><svg viewBox="0 0 20 16"><path d="M17 2v12" stroke="#ccc" stroke-width="2"/><path d="M10 3l4 5-4 5M3 3v10l5-5z" fill="#bbb" stroke="#ccc"/></svg></button>
    </div>
  </div>

  <div class="rangerow">
    <span class="vgrip"></span>
    <input class="num" type="text" value="1.00" aria-label="Animation start">
    <input class="num" type="text" value="1.00" aria-label="Playback start">
    <div class="range"><div class="thumb" style="width:50%"><i></i><span>1</span><span class="end">24</span><i></i></div></div>
    <input class="num" type="text" value="24.00" aria-label="Playback end">
    <input class="num" type="text" value="48.00" aria-label="Animation end">
    <svg class="drop" viewBox="0 0 12 12"><path d="M2 3h8l-4 6z" fill="none" stroke="#aaa"/></svg>
    <select class="num layersel" aria-label="Anim layer"><option>No Anim Layer</option></select>
    <svg class="drop" viewBox="0 0 12 12"><path d="M2 3h8l-4 6z" fill="none" stroke="#aaa"/></svg>
    <select class="num layersel" aria-label="Character set"><option>No Character Set</option></select>
    <button class="end1" aria-label="Auto keyframe"><svg viewBox="0 0 16 16"><circle cx="4" cy="7" r="2.500" fill="none" stroke="#ccc"/><path d="M7 7h9M12 7v4M15 7v4" stroke="#ccc" fill="none"/></svg></button>
    <button class="end2" aria-label="Preferences"><svg viewBox="0 0 16 16"><rect x="1" y="1" width="14" height="14" fill="#eee"/><rect x="1" y="1" width="14" height="4" fill="#4b94dc"/><path d="M3 9h10M4 12h8M6 6l3 8M11 6l-1 8" stroke="#d22"/></svg></button>
  </div>

  <div class="melrow">
    <span class="vgrip"></span>
    <label for="mel">MEL</label>
    <input id="mel" type="text">
    <output class="result"></output>
    <button class="end2" aria-label="Script editor"><svg viewBox="0 0 16 16"><rect x="1" y="1" width="14" height="14" fill="#ddd"/><rect x="1" y="1" width="14" height="4" fill="#4b94dc"/><path d="M3.500 6.500h9v3h-9zM3.500 11.500h9v2h-9z" fill="#999" stroke="#222"/></svg></button>
  </div>
  <footer class="helprow"><span class="vgrip"></span><div class="helpline"></div></footer>

  <section class="outliner">
    <header><svg class="i16"><use href="#logo"/></svg><h2>Outliner</h2>
      <div class="winbtns">
        <button aria-label="Minimize outliner"><svg viewBox="0 0 20 16"><rect x="4.500" y="8.500" width="11" height="3" fill="#fff" stroke="#445"/></svg></button>
        <button aria-label="Maximize outliner"><svg viewBox="0 0 20 16"><path d="M5.500 3.500h9v8h-9z" fill="#fff" stroke="#445"/><path d="M8 6.500h4v2H8z" fill="#667" stroke="#445"/></svg></button>
        <button class="close" aria-label="Close outliner"><svg viewBox="0 0 20 16"><path d="M6 4l8 8M14 4l-8 8" stroke="#445" stroke-width="4.500"/><path d="M6 4l8 8M14 4l-8 8" stroke="#fff" stroke-width="2.500"/></svg></button>
      </div>
    </header>
    <div class="client">
      <nav class="menu"><button>Display</button><button>Show</button><button>Help</button></nav>
      <div class="search"><svg viewBox="0 0 16 18"><path d="M2 2h12v14H2z" fill="none" stroke="#333" stroke-dasharray="3 2"/></svg><input type="text" aria-label="Filter"></div>
      <div class="treewrap">
        <ul class="tree">
          <li class="root"><svg class="exp" viewBox="0 0 12 12"><path d="M.5.500h11v11H.5zM3 6h6" fill="none" stroke="#aaa"/></svg><svg class="ti" viewBox="0 0 18 16"><path d="M6 1h11l-5 14H1z" fill="#eee"/><path d="M0 8h8" stroke="#d22" stroke-width="1.500"/><path d="M7 4l6 4-6 4z" fill="#d22"/></svg><i class="knob"></i>Sony_NWZ_A15_Digital_Music_And_Video_P</li>
          <li class="kid"><svg class="ti"><use href="#mesh"/></svg><i class="branch"></i><i class="knob"></i>under_glass</li>
          <li class="kid"><svg class="ti"><use href="#mesh"/></svg><i class="branch"></i><i class="knob"></i>display</li>
          <li class="kid"><svg class="ti"><use href="#mesh"/></svg><i class="branch"></i><i class="knob"></i>chrome</li>
          <li class="kid"><svg class="ti"><use href="#mesh"/></svg><i class="branch"></i><i class="knob"></i>pins</li>
          <li class="kid"><svg class="ti"><use href="#mesh"/></svg><i class="branch"></i><i class="knob"></i>label</li>
          <li class="kid"><svg class="ti"><use href="#mesh"/></svg><i class="branch"></i><i class="knob"></i>glass</li>
          <li class="kid"><svg class="ti"><use href="#mesh"/></svg><i class="branch"></i><i class="knob"></i>body</li>
          <li class="kid"><svg class="ti"><use href="#mesh"/></svg><i class="branch"></i><i class="knob"></i>back_cap</li>
          <li class="kid last"><svg class="ti"><use href="#mesh"/></svg><i class="branch"></i><i class="knob"></i>plastic_black</li>
          <li class="dim"><svg class="ti"><use href="#cam"/></svg>persp</li>
          <li class="dim"><svg class="ti"><use href="#cam"/></svg>top</li>
          <li class="dim"><svg class="ti"><use href="#cam"/></svg>front</li>
          <li class="dim"><svg class="ti"><use href="#cam"/></svg>side</li>
          <li class="set"><svg class="ti"><use href="#set"/></svg>defaultLightSet</li>
          <li class="set"><svg class="ti"><use href="#set"/></svg>defaultObjectSet</li>
        </ul>
        <div class="vscroll"><button aria-label="Scroll up"><svg viewBox="0 0 8 8"><path d="M4 2l4 4H0z"/></svg></button><span></span><button aria-label="Page up"><svg viewBox="0 0 8 8"><path d="M4 2l4 4H0z"/></svg></button><button aria-label="Scroll down"><svg viewBox="0 0 8 8"><path d="M4 6l4-4H0z"/></svg></button></div>
      </div>
      <div class="hscroll"><button aria-label="Scroll left"><svg viewBox="0 0 8 8"><path d="M2 4l4-4v8z"/></svg></button><span class="bar"><i></i></span><span class="rest"></span><button aria-label="Page left"><svg viewBox="0 0 8 8"><path d="M2 4l4-4v8z"/></svg></button><button aria-label="Scroll right"><svg viewBox="0 0 8 8"><path d="M6 4L2 0v8z"/></svg></button></div>
      <span class="hgrip foot"></span>
    </div>
  </section>
</div>
</body>
</html>
```
FILE: styles.css
```css
* { box-sizing: border-box; }
body { margin: 0; background: #444; color: #c8c8c8; font: 11px/16px Roboto, "Liberation Sans", sans-serif; }
h1, h2, ul, ol { margin: 0; padding: 0; font-weight: normal; list-style: none; }
button, input, select { margin: 0; padding: 0; border: 0; border-radius: 0; background: none; color: inherit; font: inherit; }
button { display: flex; align-items: center; justify-content: center; }
.sprite { position: absolute; width: 0; height: 0; }
.app { position: relative; display: flex; flex-direction: column; min-height: 100vh; overflow: hidden; }
.grow { flex: 1; }

/* window title */
.titlebar { display: flex; align-items: center; height: 21px; padding: 0 3px; color: #000; border-bottom: 1px solid #dcebfa; background: linear-gradient(90deg, #d5e0ec 0, #c5d6e9 400px, #9fbedd 600px, #93b9df 1400px, #a3bfdc 1740px, #b4c6d8 100%); }
.titlebar h1, .outliner h2 { font: 12px/18px "Open Sans", sans-serif; white-space: nowrap; }
.titlebar h1 { margin-left: 4px; }
.i16 { width: 14px; height: 15px; flex: none; }
.glass { flex: 1; display: flex; gap: 2px; height: 20px; overflow: hidden; margin: 0 80px 0 50px; filter: blur(2px); }
.glass i { flex: 1; background: radial-gradient(ellipse 8px 6px at 20px 14px, #a8607c 60%, transparent), linear-gradient(90deg, transparent 34px, #7896b8 34px 56px, transparent 56px 76px, #7896b8 76px 82px, transparent 82px) 0 12px / 100% 6px no-repeat, #9bbde0; border-left: 3px solid #8bd0f8; }
.winbtns { display: flex; align-self: flex-start; height: 18px; border: 1px solid #445; border-top: 0; border-radius: 0 0 5px 5px; overflow: hidden; box-shadow: 0 0 1px 1px #e4eef8; flex: none; }
.winbtns button { width: 28px; background: linear-gradient(#cdd9e5 45%, #98a9bb 50%, #b8c8d8); border-right: 1px solid #556; }
.winbtns .close { width: 46px; border: 0; background: linear-gradient(#e4a79a 40%, #c43a24 50%, #d8694f); }
.winbtns svg { width: 20px; height: 16px; }

/* menus */
.menu { display: flex; gap: 14px; }
.menu button { white-space: nowrap; }
.mainmenu { height: 21px; padding: 2px 8px 0; border-bottom: 1px solid #2c2c2c; background: #444; }

/* grips and separators */
.vgrip { flex: none; width: 6px; margin: 4px 3px 4px 5px; background: radial-gradient(circle at 2px 2px, #636363 1px, #333 1px 2px, transparent 2px) 0 0 / 4px 5px; opacity: .7; }
.hgrip { display: block; height: 6px; background: repeating-linear-gradient(115deg, #333 0 1px, #666 1px 2px, #444 2px 5px); opacity: .8; }
.sep { flex: none; width: 10px; align-self: stretch; background: radial-gradient(ellipse 2px 5px at center, #444 60%, #999 61% 99%, transparent), linear-gradient(90deg, transparent 4px, #2a2a2a 4px 5px, #666 5px 6px, transparent 6px) center / 10px 100% no-repeat; }
.sep.far { width: 13px; }

/* status line */
.status { display: flex; align-items: center; height: 33px; padding-right: 3px; border-bottom: 1px solid #2c2c2c; }
.status .vgrip, .shelf .vgrip, .timerow .vgrip, .rangerow .vgrip, .melrow .vgrip, .helprow .vgrip { align-self: stretch; }
.mode { width: 98px; height: 19px; align-self: flex-start; margin-top: 4px; padding-left: 3px; appearance: none; border: 1px solid #303030; border-radius: 2px; color: #c8c8c8; background: linear-gradient(#ccc, #ccc) 85px 7px / 8px 1px no-repeat, linear-gradient(#ccc, #ccc) 86px 8px / 6px 1px no-repeat, linear-gradient(#ccc, #ccc) 87px 9px / 4px 1px no-repeat, linear-gradient(#ccc, #ccc) 88px 10px / 2px 1px no-repeat, linear-gradient(90deg, #5a5a5a 81px, #333 81px 82px, #5a5a5a 82px); }
.t { flex: none; width: 26px; height: 26px; }
.t svg { width: 20px; height: 20px; }
.t.on { border: 1px solid #303030; border-radius: 3px; background: #5a5a5a; width: 25px; margin-right: 1px; }
.t.slim { width: 22px; }
.t.lock { margin-left: 2px; }
.t.tiny { width: 14px; }
.t.tiny svg { width: 12px; }
.t.wide { width: 20px; margin-right: 2px; }
.t.wide svg { width: 18px; }
.status label { display: flex; align-items: center; gap: 3px; margin-left: 2px; }
.status label input { width: 38px; height: 24px; }
.status input, .search input, .num { background: #2a2a2a; border: 1px solid #333; border-radius: 2px; color: #c8c8c8; }

/* shelf */
.shelf { display: flex; height: 72px; padding: 3px 0 2px; border-bottom: 1px solid #333; }
.shelfside { width: 22px; margin: 0 2px 0 0; border: 1px solid #2c2c2c; border-right-color: #666; display: flex; align-items: flex-end; }
.shelfside svg { width: 20px; height: 30px; }
.shelfmain { flex: 1; min-width: 0; display: flex; flex-direction: column; padding-right: 3px; }
.tabs { display: flex; align-items: flex-end; height: 22px; }
.tabs button { height: 18px; padding: 0 12px 0 11px; border: 1px solid #2e2e2e; border-width: 1px 1px 0 0; background: linear-gradient(#4b4b4b, #404040); box-shadow: inset 0 1px #555; }
.tabs .sel { height: 21px; background: #666; border-radius: 3px 3px 0 0; }
.trash { width: 14px; height: 16px; margin: 0 5px 4px auto; }
.shelfbody { flex: 1; display: flex; align-items: center; justify-content: space-between; border: 1px solid #2c2c2c; border-top: 3px double #666; box-shadow: inset 0 0 0 1px #555, inset 0 0 0 2px #333; padding: 2px 5px 4px 4px; }
.shelfitem svg { width: 30px; height: 30px; }
.spin { display: flex; flex-direction: column; gap: 2px; }
.spin button { width: 14px; height: 15px; font-size: 8px; background: #666; border: 1px solid #2c2c2c; }

/* work area */
.work { flex: 1; display: flex; min-height: 0; }
.toolbox { width: 47px; flex: none; display: flex; flex-direction: column; padding: 9px 8px 7px 5px; border-right: 2px solid #555; box-shadow: inset 4px 0 #4a4a4a, inset 5px 0 #2c2c2c; }
.toolbox .hgrip { margin: 0 0 1px; }
.tools { display: grid; gap: 3px; }
.tools button { width: 34px; height: 34px; border: 1px solid #2c2c2c; border-radius: 2px; box-shadow: inset 0 0 0 1px #606060; }
.tools button.sel { background: linear-gradient(#8e8e8e, #a8a8a8); }
.tools svg { width: 34px; height: 34px; flex: none; }
.layouts { display: grid; gap: 5px; margin-top: 14px; }
.layouts button { width: 33px; height: 33px; }
.layouts svg { width: 33px; height: 33px; }
.layouts .more { width: 32px; height: 32px; border: 1px solid #2f2f2f; box-shadow: inset 0 0 0 1px #585858; }
.mayalogo { width: 30px; height: 30px; margin: auto 0 0 2px; }
.panel { flex: 1; min-width: 0; display: flex; flex-direction: column; padding-bottom: 3px; }
.panelmenu { padding: 5px 7px 2px; }
.paneltools { display: flex; align-items: center; height: 20px; flex: none; }
.paneltools button { width: 20px; height: 20px; }
.paneltools svg { width: 16px; height: 16px; }
.paneltools .on { background: #666; border: 1px solid #2c2c2c; border-radius: 2px; }
.paneltools .dk { background: #2c2c2c; border: 1px solid #444; }
.wf { color: #d4dce4; }
.viewport { flex: 1; min-height: 0; background: linear-gradient(#8093aa 0, #7b8da2 8%, #6a7b8d 27%, #4c5862 50%, #33383f 72%, #25282c 83%, #191a1c 100%); }
.viewport svg { display: block; width: 100%; height: 100%; }
.grid path { stroke: #808284; fill: none; shape-rendering: crispEdges; }
.axes { stroke: #000; stroke-width: 2; }
.wire { fill: none; stroke: #000060; stroke-width: 3; shape-rendering: crispEdges; }
.wire .fill { fill: #000060; stroke: none; }
.wire .cut { fill-rule: evenodd; }
.wire .w7 { stroke-width: 6; }
.wire .w9 { stroke-width: 11; }
.wire .w12 { stroke-width: 12; }
.wire .gaps { stroke: #3c4250; stroke-dasharray: 3 9 6 14; }
.gizmo text { font: bold 15px "Liberation Mono", monospace; }
.gizmo .persp { fill: #00421c; font: bold 12px "Liberation Sans", sans-serif; }

/* channel box */
.channel { width: 424px; flex: none; display: flex; flex-direction: column; padding: 3px 3px 3px 0; }
.docktitle { display: flex; align-items: center; height: 18px; }
.docktitle .hgrip { width: 124px; }
.docktitle h2 { flex: 1; text-align: center; font-size: 10px; }
.docktitle button { width: 13px; height: 13px; margin-left: 2px; background: #555; border: 1px solid #222; }
.chicons, .layericons { display: flex; justify-content: flex-end; gap: 4px; }
.chicons { margin-top: 3px; }
.chicons svg { width: 16px; height: 16px; }
.chmenu { padding: 6px 6px 3px; }
.chbox { flex: 1; background: #2a2a2a; border: 2px solid #333; outline: 1px solid #5c5c5c; outline-offset: -1px; }
.hgrip.mid { width: 138px; margin: 3px auto 4px; }
.layertabs button { padding: 0 12px 0 11px; }
.layertabs { height: 20px; }
.layers { display: flex; flex-direction: column; height: 189px; border: 1px solid #555; border-top-color: #2c2c2c; padding: 3px 4px 4px; }
.layers .menu { padding-left: 4px; }
.layericons { gap: 6px; margin: 5px 2px 1px; padding-bottom: 3px; }
.layericons svg { width: 19px; height: 19px; }
.layerlist { flex: 1; background: #2a2a2a; border: 1px solid #202020; padding: 4px; }
.layer { display: flex; align-items: center; gap: 3px; height: 16px; color: #fff; }
.layer svg { width: 16px; height: 15px; }
.layer span { margin-left: -1px; }
.vis { width: 10px; height: 14px; border: 1px solid #1c1c1c; border-radius: 2px; }
.sidetabs { width: 22px; flex: none; padding-top: 3px; }
.sidetabs button { width: 20px; height: 100px; writing-mode: vertical-rl; border: 1px solid #2c2c2c; border-radius: 0 3px 3px 0; }
.sidetabs .sel { width: 21px; height: 152px; background: #666; }

/* playback rows */
.timerow, .rangerow, .melrow, .helprow { display: flex; align-items: center; border-top: 1px solid #2c2c2c; box-shadow: inset 0 1px #505050; }
.timerow { height: 37px; }
.timeline { flex: 1; display: flex; height: 33px; padding: 0 8px 0 7px; background: #747474; border-top: 1px solid #222; color: #000; }
.timeline li { flex: 1; display: flex; flex-direction: column; padding: 0 0 0 14px; line-height: 11px; background: linear-gradient(#000, #000) 0 14px / 2px 16px no-repeat; }
.timeline .cur { background: linear-gradient(#000, #000) 0 14px / 2px 16px no-repeat, #5c5c5c; }
.timeline b { color: #fff; line-height: 20px; font-weight: 500; }
.num { width: 68px; height: 21px; padding: 0 4px; flex: none; appearance: none; border-color: #383838; }
.timerow .num { margin: 0 2px 3px 4px; height: 19px; }
.play { display: flex; padding-right: 2px; }
.play button { width: 28px; height: 30px; }
.play svg { width: 20px; height: 20px; }
.rangerow { height: 29px; gap: 4px; padding-bottom: 2px; }
.rangerow .vgrip { margin-right: -1px; }
.range { flex: 1; height: 22px; padding: 3px 7px 1px; background: #242424; border: 1px solid #383838; }
.thumb { height: 17px; display: flex; align-items: center; gap: 5px; padding: 0 4px; background: #666; border-bottom: 1px solid #222; }
.thumb i { width: 10px; height: 12px; border: 1px solid #222; border-width: 0 1px 1px 0; }
.thumb .end { margin-left: auto; }
.drop { width: 12px; height: 12px; margin: 0 2px; }
.layersel { width: 101px; }
.end1, .end2 { width: 16px; height: 16px; flex: none; }
.end1 svg, .end2 svg { width: 16px; height: 16px; }
.rangerow .end2, .melrow .end2 { margin-right: 5px; }
.melrow { height: 31px; padding-bottom: 1px; }
.melrow label { width: 45px; padding-left: 9px; }
.melrow input { flex: 1; height: 24px; background: #2a2a2a; border: 1px solid #383838; margin-right: 7px; }
.result { flex: 1; height: 24px; background: #000; margin-right: 2px; }
.helprow { height: 29px; }
.helpline { flex: 1; height: 23px; margin-right: 4px; border: 1px solid #2c2c2c; border-bottom-color: #606060; }

/* floating outliner window */
.outliner { position: absolute; top: 133px; right: 450px; bottom: 128px; width: 324px; display: flex; flex-direction: column; padding: 0 6px 6px; border: 1px solid #111; border-radius: 6px 6px 4px 4px; box-shadow: inset 0 0 0 1px #cfe0ee; background: linear-gradient(90deg, #93a3b3 0, #8796a4 90px, #44566a 190px, #738292 260px, #98a5b2 100%) 0 0 / 100% 28px no-repeat, linear-gradient(#93a3b3 28px, #d8e2ea 214px, #3c536c 215px, #1c2c3c 60%, #24384c); }
.outliner header { display: flex; align-items: center; height: 28px; padding-left: 2px; color: #000; }
.outliner h2 { flex: 1; margin-left: 2px; padding-left: 4px; background: radial-gradient(ellipse 50px 14px at 24px 50%, #c4ced8 0, transparent); }
.client { flex: 1; min-height: 0; display: flex; flex-direction: column; padding: 3px 3px 1px; background: #444; border: 1px solid #c4c8cc; outline: 1px solid #222; }
.client .menu { padding: 1px 5px 5px; }
.search { display: flex; align-items: center; gap: 8px; height: 18px; margin-bottom: 5px; }
.search svg { width: 16px; height: 18px; }
.search input { flex: 1; min-width: 0; height: 18px; }
.treewrap { flex: 1; display: flex; min-height: 0; }
.tree { flex: 1; min-width: 0; background: #2a2a2a; overflow: hidden; }
.tree li { display: flex; align-items: center; height: 20px; padding-left: 43px; white-space: nowrap; color: #d0d0d0; }
.tree .root { padding-left: 2px; }
.exp { width: 12px; height: 12px; margin-right: 29px; flex: none; }
.ti { width: 18px; height: 18px; flex: none; }
.tree .dim, .tree .set { gap: 10px; }
.tree .dim { color: #696969; }
.knob { width: 5px; height: 5px; margin: 0 4px 0 0; border: 1px solid #d0d0d0; border-radius: 50%; flex: none; }
.root .knob { margin-left: 2px; margin-right: 3px; }
.branch { align-self: flex-start; width: 18px; height: 20px; margin-left: 4px; background: linear-gradient(#d0d0d0, #d0d0d0) 0 0 / 1px 20px no-repeat, linear-gradient(#d0d0d0, #d0d0d0) 0 10px / 18px 1px no-repeat; flex: none; }
.last .branch { background-size: 1px 11px, 18px 1px; }
.vscroll { width: 16px; display: flex; flex-direction: column; gap: 2px; padding-left: 2px; }
.vscroll span { flex: 1; background: #444; border: 1px solid #666; border-top-color: #777; }
.vscroll button, .hscroll button { flex: none; width: 14px; height: 14px; background: #555; border: 1px solid #2c2c2c; }
.vscroll svg, .hscroll svg { width: 8px; height: 8px; fill: #ddd; }
.hscroll { display: flex; gap: 1px; height: 16px; margin: 1px 17px 0 0; }
.hscroll .bar { width: 198px; height: 15px; background: #666; display: flex; justify-content: center; align-items: center; }
.hscroll .bar i { width: 20px; height: 10px; background: radial-gradient(#333 1px, transparent 1px) 0 0 / 4px 4px; }
.hscroll .rest { flex: 1; height: 15px; background: #3a3a3a; }
.hgrip.foot { width: 100px; height: 5px; margin: 2px auto 1px; }
```
